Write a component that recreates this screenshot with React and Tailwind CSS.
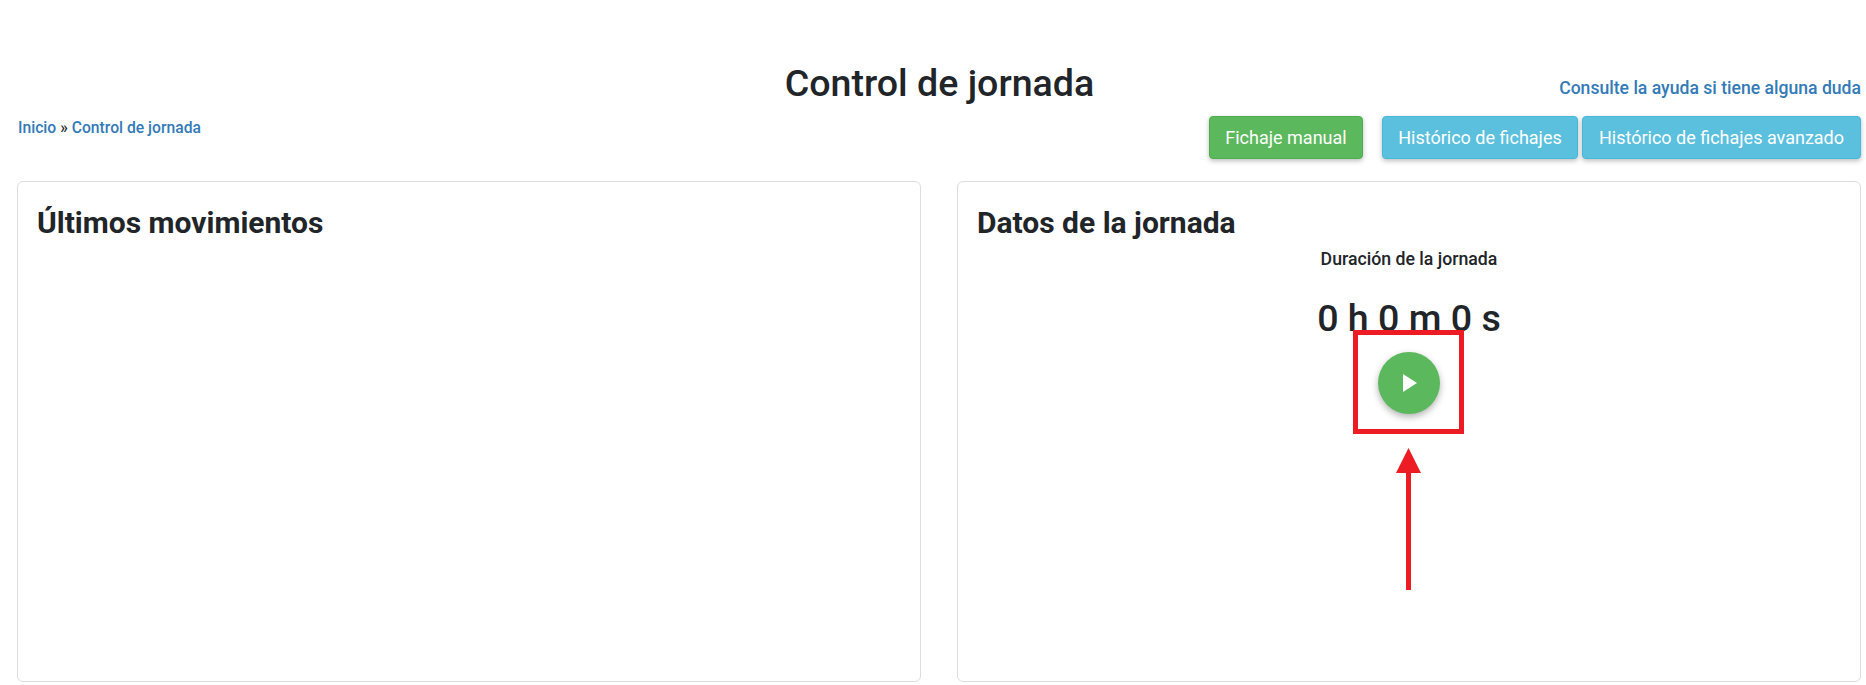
import React from "react";

function ToolButton({ color, children }) {
  return (
    <button className={`h-[43px] rounded-[4px] border text-[18px] leading-none text-white shadow-[0_2px_5px_rgba(0,0,0,0.26)] ${color}`}>
      {children}
    </button>
  );
}

export default function App() {
  return (
    <div className="relative h-[685px] w-[1866px] overflow-hidden bg-white font-['Roboto',sans-serif] text-[#212529]">
      <header className="flex items-start justify-between pl-[18px] pr-[5px] pt-[60px]">
        <div className="flex-1" />
        <h1 className="text-[37.6px] font-medium leading-[46px] tracking-normal">Control de jornada</h1>
        <div className="flex flex-1 justify-end pt-[17px]">
          <a className="text-[17.6px] font-medium leading-[22px] text-[#337ab7]">Consulte la ayuda si tiene alguna duda</a>
        </div>
      </header>

      <div className="flex items-start justify-between pl-[18px] pr-[5px] pt-[10px]">
        <nav className="pt-[2px] text-[15.7px] font-medium leading-[20px] text-[#337ab7]">
          Inicio <span className="text-[#212529]">»</span> Control de jornada
        </nav>
        <div className="flex">
          <div className="mr-[19px]">
            <ToolButton color="w-[154px] border-[#4cae4c] bg-[#5cb85c]">Fichaje manual</ToolButton>
          </div>
          <div className="flex gap-[4px]">
            <ToolButton color="w-[196px] border-[#46b8da] bg-[#5bc0de]">Histórico de fichajes</ToolButton>
            <ToolButton color="w-[279px] border-[#46b8da] bg-[#5bc0de]">Histórico de fichajes avanzado</ToolButton>
          </div>
        </div>
      </div>

      <main className="grid grid-cols-[904px_904px] justify-between gap-[36px] pl-[17px] pr-[5px] pt-[22px]">
        <section className="h-[501px] rounded-[6px] border border-[#dddddd] px-[19px] py-[25px]">
          <h2 className="text-[30px] font-bold leading-[32px]">Últimos movimientos</h2>
        </section>
        <section className="h-[501px] rounded-[6px] border border-[#dddddd] px-[19px] py-[25px]">
          <h2 className="text-[30px] font-bold leading-[32px]">Datos de la jornada</h2>
          <div className="flex flex-col items-center">
            <p className="mt-[8px] text-[17.7px] font-medium leading-[24px]">Duración de la jornada</p>
            <p className="mt-[25px] text-[37.6px] font-medium leading-[44px]">0 h 0 m 0 s</p>
            <button className="mt-[12px] flex h-[62px] w-[62px] items-center justify-center rounded-full bg-[#5cb85c] shadow-[0_3px_7px_rgba(0,0,0,0.3)]">
              <svg width="14" height="18" viewBox="0 0 14 18" aria-hidden="true" className="ml-[1px]">
                <path d="M0 0 L14 9 L0 18 Z" fill="#fff" />
              </svg>
            </button>
          </div>
        </section>
      </main>

      {/* Annotation over the page */}
      <div className="absolute left-[1353px] top-[330px] h-[104px] w-[111px] border-[5px] border-[#ed1c24]" />
      <svg className="absolute left-[1396px] top-[448px]" width="25" height="142" viewBox="0 0 25 142" aria-hidden="true">
        <path d="M12.5 0 L25 25 L15 25 L15 142 L10 142 L10 25 L0 25 Z" fill="#ed1c24" />
      </svg>
    </div>
  );
}
